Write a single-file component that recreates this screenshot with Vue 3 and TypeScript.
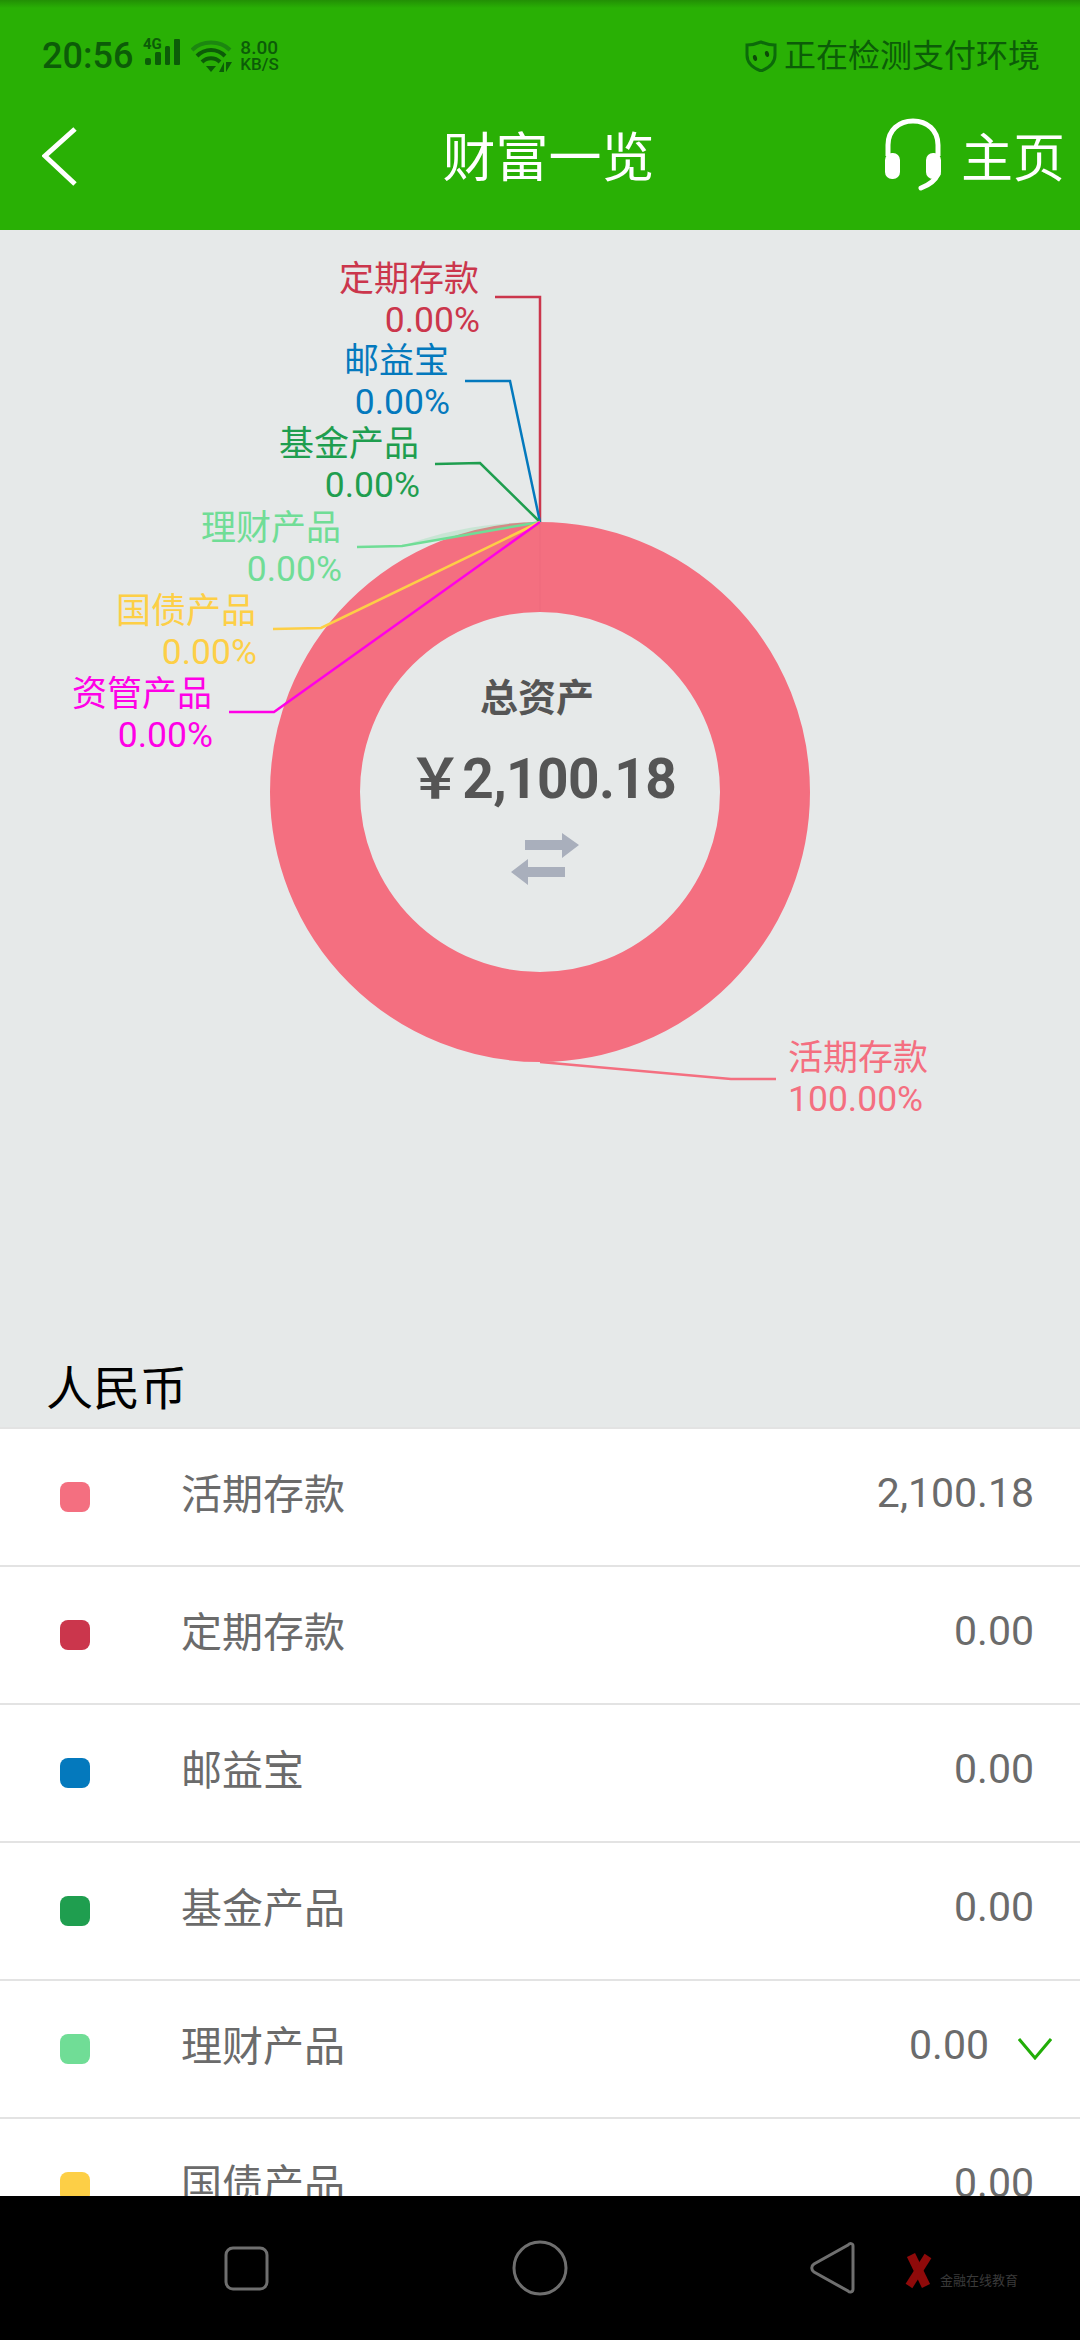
<script setup lang="ts">
type Slice = { name: string; pct: string; value: string; color: string }

const slices: Slice[] = [
  { name: '活期存款', pct: '100.00%', value: '2,100.18', color: '#f46f80' },
  { name: '定期存款', pct: '0.00%', value: '0.00', color: '#cb364c' },
  { name: '邮益宝', pct: '0.00%', value: '0.00', color: '#0479bd' },
  { name: '基金产品', pct: '0.00%', value: '0.00', color: '#1f9e4f' },
  { name: '理财产品', pct: '0.00%', value: '0.00', color: '#70dd96' },
  { name: '国债产品', pct: '0.00%', value: '0.00', color: '#fdcf46' },
  { name: '资管产品', pct: '0.00%', value: '0.00', color: '#ff00e6' },
]

// only six rows fit above the key bar
const rows = slices.slice(0, 6)

// leader lines and label anchors, in page coordinates (svg viewBox starts at y=230)
const labels = [
  { i: 1, points: '540,522 540,297 495,297', x: 479, y: 291, anchor: 'end' },
  { i: 2, points: '540,522 510,381 465,381', x: 449, y: 373, anchor: 'end' },
  { i: 3, points: '540,522 480,463 435,464', x: 419, y: 456, anchor: 'end' },
  { i: 4, points: '540,522 402,546 357,547', x: 341, y: 540, anchor: 'end' },
  { i: 5, points: '540,522 321,628 273,629', x: 256, y: 623, anchor: 'end' },
  { i: 6, points: '540,522 274,712 229,712', x: 212, y: 706, anchor: 'end' },
  { i: 0, points: '540,1062 731,1079 776,1079', x: 788, y: 1070, anchor: 'start' },
]
</script>

<template>
  <div class="phone">
    <header class="top">
      <div class="status">
        <span class="status__time">20:56</span>
        <svg class="status__signal" width="38" height="36" viewBox="0 -6 38 36">
          <text x="0" y="11" class="status__net">4G</text>
          <rect x="2" y="20" width="6" height="7" rx="2" fill="#0c5c08" />
          <rect x="12" y="14" width="6" height="13" rx="1.5" fill="#0c5c08" />
          <rect x="22" y="8" width="5" height="19" rx="1.5" fill="#0c5c08" />
          <rect x="31" y="1" width="6" height="26" rx="1" fill="#0c5c08" />
        </svg>
        <svg class="status__wifi" width="42" height="34" viewBox="0 0 42 34">
          <path d="M1 11 C11 1 29 1 39 11" fill="none" stroke="#1c8710" stroke-width="4" />
          <path d="M6 17 C14 9 26 9 34 17" fill="none" stroke="#0c5c08" stroke-width="4" />
          <path d="M11 23 C16 18 24 18 29 23" fill="none" stroke="#0c5c08" stroke-width="4" />
          <path d="M15 27 H25 L20 33 Z" fill="#0c5c08" />
          <path d="M28 33 L33 23 V33 Z M35 23 V33 L41 23 Z" fill="#0c5c08" />
        </svg>
        <div class="status__speed">
          <span class="status__num">8.00</span>
          <span class="status__unit">KB/S</span>
        </div>
        <div class="status__right">
          <svg width="32" height="32" viewBox="0 0 32 32">
            <path d="M16 2 C21 4 25 5 30 5 V15 C30 23 24 28 16 31 C8 28 2 23 2 15 V5 C7 5 11 4 16 2 Z" fill="none" stroke="#0c6a0a" stroke-width="3" />
            <ellipse cx="10" cy="18" rx="2" ry="3" fill="#0c4a08" transform="rotate(-15 10 18)" />
            <ellipse cx="22" cy="14" rx="2" ry="3" fill="#0c4a08" transform="rotate(-15 22 14)" />
          </svg>
          <span>正在检测支付环境</span>
        </div>
      </div>
      <nav class="bar">
        <svg class="bar__back" width="36" height="62" viewBox="0 0 36 62">
          <path d="M33 3 L3 30 L33 58" fill="none" stroke="#fff" stroke-width="5" />
        </svg>
        <h1 class="bar__title">财富一览</h1>
        <div class="bar__home">
          <svg width="56" height="73" viewBox="0 0 56 73">
            <path d="M3 38 V27 C3 12 14 3 28 3 C42 3 53 12 53 27 V38" fill="none" stroke="#fff" stroke-width="5" />
            <rect x="0" y="35" width="15" height="26" rx="7" fill="#fff" />
            <rect x="41" y="35" width="15" height="26" rx="7" fill="#fff" />
            <path d="M53 56 C50 63 44 67 36 70" fill="none" stroke="#fff" stroke-width="5" stroke-linecap="round" />
          </svg>
          <span>主页</span>
        </div>
      </nav>
    </header>

    <section class="chart">
      <svg class="chart__svg" width="1080" height="1110" viewBox="0 230 1080 1110">
        <circle cx="540" cy="792" r="225" fill="none" stroke="#f46f80" stroke-width="90" />
        <line x1="540" y1="522" x2="540" y2="612" stroke="#ee6a7c" stroke-width="1" />
        <path d="M400 547 C450 528 500 522 540 522 Z" fill="#70dd96" opacity="0.25" />

        <g v-for="l in labels" :key="l.i">
          <polyline :points="l.points" fill="none" :stroke="slices[l.i].color" stroke-width="2.5" />
          <text class="chart__label" :x="l.x" :y="l.y" :text-anchor="l.anchor" :fill="slices[l.i].color">{{ slices[l.i].name }}</text>
          <text class="chart__label chart__label--pct" :x="l.x + (l.i ? 1 : 0)" :y="l.y + 41" :text-anchor="l.anchor" :fill="slices[l.i].color">{{ slices[l.i].pct }}</text>
        </g>

        <text class="chart__caption" x="537" y="711" text-anchor="middle">总资产</text>
        <text class="chart__total" x="542" y="798" text-anchor="middle">￥2,100.18</text>
        <path d="M525 840 H562 V833 L579 845 L562 858 V850 H525 Z" fill="#a9afbc" />
        <path d="M565 867 H528 V859 L511 872 L528 885 V877 H565 Z" fill="#a9afbc" />
      </svg>
      <h2 class="chart__section">人民币</h2>
    </section>

    <ul class="list">
      <li v-for="(s, i) in rows" :key="s.name" class="row" :class="{ 'row--more': i === 4 }">
        <i class="row__dot" :style="{ background: s.color }"></i>
        <span class="row__name">{{ s.name }}</span>
        <span class="row__value">{{ s.value }}</span>
        <svg v-if="i === 4" class="row__chev" width="34" height="22" viewBox="0 0 34 22">
          <path d="M1 1 L17 20 L33 1" fill="none" stroke="#22ad08" stroke-width="3" />
        </svg>
      </li>
    </ul>

    <footer class="keys">
      <svg class="keys__icons" width="1080" height="144" viewBox="0 2196 1080 144">
        <rect x="226" y="2248" width="41" height="41" rx="7" fill="none" stroke="#6f6f6f" stroke-width="3" />
        <circle cx="540" cy="2268" r="26" fill="none" stroke="#6f6f6f" stroke-width="3" />
        <path d="M853 2246 C853 2243 850 2243 848 2245 L814 2264 C811 2266 811 2270 814 2272 L848 2291 C850 2293 853 2292 853 2289 Z" fill="none" stroke="#6f6f6f" stroke-width="3" />
        <line x1="911" y1="2255" x2="926" y2="2286" stroke="#8f0a0a" stroke-width="9" />
        <line x1="928" y1="2256" x2="909" y2="2286" stroke="#8f0a0a" stroke-width="8" />
        <text class="keys__mark" x="940" y="2285">金融在线教育</text>
      </svg>
    </footer>
  </div>
</template>

<style scoped>
.phone {
  width: 1080px;
  height: 2340px;
  display: flex;
  flex-direction: column;
  overflow: hidden;
  background: #e6e9e9;
  font-family: Roboto, 'Noto Sans CJK SC', sans-serif;
}
.top {
  height: 230px;
  flex: none;
  background: linear-gradient(180deg, #228f05 0, #29b005 8px);
}
.status {
  height: 84px;
  box-sizing: border-box;
  padding: 28px 40px 0 42px;
  display: flex;
  align-items: center;
  color: #0c5c08;
}
.status__time {
  font-size: 36px;
  font-weight: 500;
}
.status__signal {
  margin-left: 10px;
  margin-top: -12px;
}
.status__net {
  font: 700 15px Roboto, sans-serif;
  fill: #0c5c08;
}
.status__wifi {
  margin-left: 10px;
}
.status__speed {
  margin-left: 7px;
  display: flex;
  flex-direction: column;
  line-height: 16px;
  font-weight: 500;
}
.status__num {
  font-size: 19px;
}
.status__unit {
  font-size: 17px;
}
.status__right {
  margin-left: auto;
  display: flex;
  align-items: center;
  gap: 7px;
  font-size: 32px;
  line-height: 36px;
}
.bar {
  height: 146px;
  box-sizing: border-box;
  padding: 0 15px 6px 42px;
  display: grid;
  grid-template-columns: 1fr auto 1fr;
  align-items: center;
  color: #fff;
}
.bar__back {
  margin-top: 6px;
}
.bar__title {
  margin: 0 10px 0 0;
  font-size: 53px;
  font-weight: 400;
}
.bar__home {
  justify-self: end;
  display: flex;
  align-items: center;
  gap: 20px;
  font-size: 52px;
}
.chart {
  height: 1197px;
  flex: none;
  display: flex;
  flex-direction: column;
}
.chart__svg {
  display: block;
  flex: none;
}
.chart__label {
  font-size: 35px;
  font-family: Roboto, 'Noto Sans CJK SC', sans-serif;
}
.chart__label--pct {
  font-size: 35.5px;
}
.chart__caption {
  font-size: 38px;
  font-weight: 700;
  fill: #555;
  font-family: 'Noto Sans CJK SC', sans-serif;
}
.chart__total {
  font-size: 55px;
  font-weight: 700;
  letter-spacing: -0.6px;
  fill: #555;
  font-family: Roboto, 'Noto Sans CJK SC', sans-serif;
}
.chart__section {
  margin: 17px 0 0 46px;
  font-size: 47px;
  line-height: 64px;
  font-weight: 400;
  color: #000;
}
.list {
  flex: 1;
  min-height: 0;
  margin: 0;
  padding: 0;
  list-style: none;
  overflow: hidden;
  background: #fff;
}
.row {
  height: 138px;
  box-sizing: border-box;
  padding-right: 46px;
  border-top: 2px solid #e3e3e3;
  display: flex;
  align-items: center;
  font-size: 41px;
  color: #6b6b6b;
}
.row--more {
  padding-right: 28px;
}
.row__dot {
  width: 30px;
  height: 30px;
  margin-left: 60px;
  border-radius: 8px;
  flex: none;
}
.row__name {
  margin-left: 91px;
  margin-bottom: 12px;
}
.row__value {
  margin-left: auto;
  margin-bottom: 8px;
}
.row__chev {
  margin-left: 29px;
}
.keys {
  height: 144px;
  flex: none;
  background: #000;
}
.keys__icons {
  display: block;
}
.keys__mark {
  font-size: 13px;
  fill: #3a3a3a;
  font-family: 'Noto Sans CJK SC', sans-serif;
}
</style>

<style>
html,
body {
  margin: 0;
  background: #e6e9e9;
}
</style>
